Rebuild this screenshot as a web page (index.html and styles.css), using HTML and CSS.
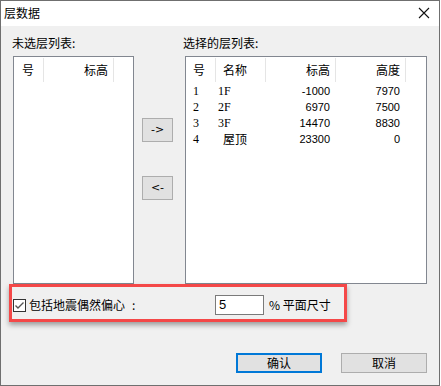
FILE: index.html
```html
<!DOCTYPE html>
<html lang="zh">
<head>
    <meta charset="UTF-8">
    <title>层数据</title>
    <link rel="stylesheet" href="styles.css">
</head>
<body>
    <div class="dialog">
        <div class="titlebar">
            <span class="title">层数据</span>
            <svg class="close" width="12" height="12" viewBox="0 0 12 12">
                <path d="M1 1 L11 11 M11 1 L1 11" stroke="#111" stroke-width="1.1" fill="none"/>
            </svg>
        </div>
        <div class="content">
            <div class="labels">
                <span class="label-left">未选层列表:</span>
                <span>选择的层列表:</span>
            </div>
            <div class="lists">
                <div class="listbox list-left">
                    <div class="row head">
                        <span class="c-no">号</span>
                        <span class="c-elev-l">标高</span>
                    </div>
                </div>
                <div class="movers">
                    <button class="btn mover">-&gt;</button>
                    <button class="btn mover mover-back">&lt;-</button>
                </div>
                <div class="listbox list-right">
                    <div class="row head">
                        <span class="c-no">号</span>
                        <span class="c-name">名称</span>
                        <span class="c-num">标高</span>
                        <span class="c-num">高度</span>
                    </div>
                    <div class="row data">
                        <span class="c-no serif">1</span>
                        <span class="c-name serif">1F</span>
                        <span class="c-num">-1000</span>
                        <span class="c-num">7970</span>
                    </div>
                    <div class="row data">
                        <span class="c-no serif">2</span>
                        <span class="c-name serif">2F</span>
                        <span class="c-num">6970</span>
                        <span class="c-num">7500</span>
                    </div>
                    <div class="row data">
                        <span class="c-no serif">3</span>
                        <span class="c-name serif">3F</span>
                        <span class="c-num">14470</span>
                        <span class="c-num">8830</span>
                    </div>
                    <div class="row data">
                        <span class="c-no serif">4</span>
                        <span class="c-name cjk">屋顶</span>
                        <span class="c-num">23300</span>
                        <span class="c-num">0</span>
                    </div>
                </div>
            </div>
            <div class="option">
                <svg class="check" width="13" height="13" viewBox="0 0 13 13">
                    <rect x="0.5" y="0.5" width="12" height="12" fill="#fff" stroke="#333"/>
                    <path d="M2.5 6.5 L5 9 L10.5 3.5" stroke="#555" stroke-width="1.4" fill="none"/>
                </svg>
                <span class="option-label">包括地震偶然偏心<span class="colon">:</span></span>
                <span class="field">5</span>
                <span class="unit">% 平面尺寸</span>
                <div class="mark"></div>
            </div>
            <div class="actions">
                <button class="btn ok">确认</button>
                <button class="btn">取消</button>
            </div>
        </div>
    </div>
</body>
</html>
```

FILE: styles.css
```css
body {
    margin: 0;
    font-family: "Noto Sans CJK SC", "Liberation Sans", sans-serif;
    font-size: 12px;
    color: #000;
    background: #fff;
}
.dialog {
    width: 440px;
    height: 386px;
    box-sizing: border-box;
    border: 1px solid #6f6f6f;
    background-color: #f0f0f0;
}
.titlebar {
    height: 25px;
    background-color: #fff;
    display: flex;
    align-items: center;
    justify-content: space-between;
    padding-left: 3px;
    padding-right: 9px;
}
.title {
    line-height: 14px;
    margin-top: -1px;
}
.close {
    margin-top: -1px;
}
.content {
    position: relative;
}
.labels {
    display: flex;
    padding-left: 11px;
    padding-top: 10px;
    line-height: 14px;
    height: 14px;
}
.label-left {
    width: 171px;
}
.lists {
    display: flex;
    margin-top: 6px;
    margin-left: 12px;
    height: 228px;
}
.listbox {
    box-sizing: border-box;
    border: 1px solid #828790;
    background-color: #fff;
}
.list-left {
    width: 121px;
}
.list-right {
    width: 242px;
}
.movers {
    width: 51px;
    display: flex;
    flex-direction: column;
    align-items: flex-start;
    padding-left: 8px;
    box-sizing: border-box;
    padding-top: 62px;
}
.btn {
    font-family: "Noto Sans CJK SC", "Liberation Sans", sans-serif;
    font-size: 12px;
    background-color: #e1e1e1;
    border: 1px solid #adadad;
    padding: 0;
    color: #000;
    line-height: 14px;
}
.mover {
    width: 31px;
    height: 24px;
    font-family: "DejaVu Sans", "Liberation Sans", sans-serif;
    font-size: 11px;
}
.mover-back {
    margin-top: 34px;
}
.row {
    display: flex;
    align-items: center;
}
.row.head {
    height: 26px;
}
.row.data {
    height: 16px;
}
.row > span {
    box-sizing: border-box;
    line-height: 14px;
}
.head > span {
    height: 24px;
    line-height: 24px;
    border-right: 1px solid #e5e5e5;
}
.c-no {
    width: 30px;
    padding-left: 7px;
}
.list-left .c-no {
    padding-left: 8px;
}
.c-elev-l {
    width: 70px;
    text-align: right;
    padding-right: 5px;
}
.c-name {
    width: 50px;
    padding-left: 7px;
}
.data .c-name.serif {
    padding-left: 2px;
}
.c-num {
    width: 70px;
    text-align: right;
    padding-right: 5px;
}
.data .c-num {
    font-family: "Liberation Sans", sans-serif;
    font-size: 11px;
    padding-right: 6px;
}
.serif {
    font-family: "Liberation Serif", serif;
    font-size: 12px;
}
.option {
    display: flex;
    align-items: center;
    margin-top: 11px;
    margin-left: 12px;
    height: 20px;
}
.check {
    display: block;
}
.option-label {
    margin-left: 3px;
    width: 186px;
    line-height: 14px;
}
.colon {
    margin-left: 7px;
}
.field {
    box-sizing: border-box;
    width: 49px;
    height: 20px;
    border: 1px solid #7a7a7a;
    background-color: #fff;
    font-family: "Liberation Sans", sans-serif;
    font-size: 13px;
    line-height: 18px;
    padding-left: 3px;
}
.unit {
    margin-left: 5px;
    line-height: 14px;
}
.mark {
    position: absolute;
    left: 8px;
    top: 258px;
    width: 338px;
    height: 38px;
    box-sizing: border-box;
    border: 3px solid #f44848;
    box-shadow: 0 3px 5px rgba(0, 0, 0, 0.35);
}
.actions {
    display: flex;
    justify-content: flex-end;
    gap: 19px;
    margin-top: 38px;
    padding-right: 12px;
}
.actions .btn {
    width: 86px;
    height: 20px;
}
.actions .ok {
    border: 2px solid #0078d7;
}
```
